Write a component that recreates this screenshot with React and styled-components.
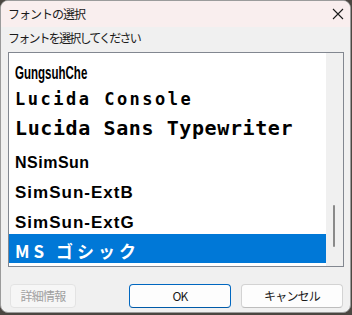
import styled, { createGlobalStyle } from 'styled-components';

const GlobalStyle = createGlobalStyle`
    html, body {
        margin: 0;
        padding: 0;
        background: #4b4641;
    }
    body {
        width: 352px;
        height: 315px;
        overflow: hidden;
    }
`;

const fonts = [
    { name: 'GungsuhChe', family: 'sans', size: 18, spacing: 0, squeeze: 0.64, h: 32, top: 11 },
    { name: 'Lucida Console', family: 'mono', size: 17, spacing: 2.5, h: 28, top: 6 },
    { name: 'Lucida Sans Typewriter', family: 'mono', size: 20, spacing: 0.6, h: 34, top: 5 },
    { name: 'NSimSun', family: 'sans', size: 16, spacing: 0.5, h: 29, top: 8 },
    { name: 'SimSun-ExtB', family: 'sans', size: 17, spacing: 1, h: 29, top: 8 },
    { name: 'SimSun-ExtG', family: 'sans', size: 17, spacing: 1, h: 29, top: 9 },
    { name: 'MS ゴシック', family: 'cjk', size: 17, spacing: 4, h: 29, top: 8, selected: true },
];

const families = {
    sans: '"Liberation Sans", Arial, sans-serif',
    mono: '"DejaVu Sans Mono", "Liberation Mono", monospace',
    cjk: '"Noto Sans CJK JP", sans-serif',
};

const FontDialog = () => {
    return (
        <Window>
            <TitleBar>
                <Title>フォントの選択</Title>
                <CloseButton>
                    <svg width="12" height="12" viewBox="0 0 12 12">
                        <path d="M1 1 L11 11 M11 1 L1 11" stroke="#1b1b1b" strokeWidth="1.1" />
                    </svg>
                </CloseButton>
            </TitleBar>
            <Body>
                <Label>フォントを選択してください</Label>
                <ListBox>
                    <Items>
                        {fonts.map((f) => (
                            <Item key={f.name} $h={f.h} $top={f.top} $selected={f.selected}>
                                <ItemText
                                    $family={f.family}
                                    $size={f.size}
                                    $spacing={f.spacing}
                                    $squeeze={f.squeeze}
                                >
                                    {f.name}
                                </ItemText>
                            </Item>
                        ))}
                    </Items>
                    <ScrollTrack>
                        <Thumb />
                    </ScrollTrack>
                </ListBox>
            </Body>
            <Footer>
                <Button disabled $width={66}>詳細情報</Button>
                <Actions>
                    <Button $width={102} $primary>OK</Button>
                    <Button $width={102}>キャンセル</Button>
                </Actions>
            </Footer>
        </Window>
    );
};

const App = () => (
    <>
        <GlobalStyle />
        <FontDialog />
    </>
);

const Window = styled.div`
    width: 349px;
    height: 311px;
    border: 1px solid #9b9b9b;
    border-radius: 8px;
    background: #f0f0f0;
    overflow: hidden;
    display: flex;
    flex-direction: column;
    font-family: "Noto Sans CJK JP", sans-serif;
    color: #1a1a1a;
`;

const TitleBar = styled.div`
    height: 26px;
    flex: none;
    background: #f9eeee;
    display: flex;
    align-items: center;
    justify-content: space-between;
    padding: 0 4px 0 7px;
`;

const Title = styled.span`
    font-size: 12px;
    letter-spacing: -1px;
    line-height: 1;
`;

const CloseButton = styled.div`
    width: 14px;
    height: 14px;
    display: flex;
    align-items: center;
    justify-content: center;
    margin-right: 1px;
`;

const Body = styled.div`
    padding: 0 0 0 7px;
`;

const Label = styled.div`
    height: 25px;
    font-size: 12px;
    letter-spacing: -1.8px;
    line-height: 22px;
`;

const ListBox = styled.div`
    width: 334px;
    height: 213px;
    border: 1px solid #828790;
    background: #fff;
    display: flex;
`;

const Items = styled.div`
    flex: 1;
    overflow: hidden;
`;

const Item = styled.div`
    height: ${(p) => p.$h}px;
    box-sizing: border-box;
    display: flex;
    align-items: flex-start;
    padding: ${(p) => p.$top}px 0 0 6px;
    background: ${(p) => (p.$selected ? '#0078d7' : 'transparent')};
    color: ${(p) => (p.$selected ? '#fff' : '#000')};
    white-space: nowrap;
`;

const ItemText = styled.span`
    display: block;
    font-family: ${(p) => families[p.$family]};
    font-size: ${(p) => p.$size}px;
    letter-spacing: ${(p) => p.$spacing}px;
    font-weight: bold;
    line-height: 1;
    transform: ${(p) => (p.$squeeze ? `scaleX(${p.$squeeze})` : 'none')};
    transform-origin: left center;
`;

const ScrollTrack = styled.div`
    width: 17px;
    flex: none;
    background: #f0f0f0;
    position: relative;
`;

const Thumb = styled.div`
    position: absolute;
    left: 7px;
    top: 152px;
    width: 2px;
    height: 42px;
    border-radius: 1px;
    background: #8a8a8a;
`;

const Footer = styled.div`
    display: flex;
    align-items: center;
    padding: 17px 7px 0 9px;
`;

const Actions = styled.div`
    margin-left: auto;
    display: flex;
    gap: 10px;
`;

const Button = styled.button`
    width: ${(p) => p.$width}px;
    height: 24px;
    box-sizing: border-box;
    border-radius: 4px;
    font-family: "Noto Sans CJK JP", sans-serif;
    font-size: 12px;
    letter-spacing: -0.8px;
    padding: 0;
    line-height: 1;
    color: #1a1a1a;
    background: #fdfdfd;
    border: 1px solid ${(p) => (p.$primary ? '#0067c0' : '#d3d3d3')};
    border-bottom-color: ${(p) => (p.$primary ? '#005aa8' : '#bdbdbd')};

    &:disabled {
        color: #a0a0a0;
        background: #f6f6f6;
        border-color: #e3e3e3;
    }
`;

export default App;
